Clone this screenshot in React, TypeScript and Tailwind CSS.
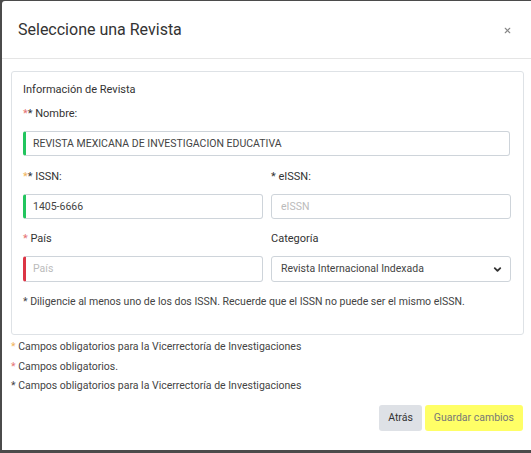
import { ChevronDown, X } from "lucide-react";

export default function App() {
  return (
    <div className="h-[453px] w-[531px] overflow-hidden bg-[#4b4b4b] pl-[2px] pt-[1px] font-[Roboto,sans-serif]">
      <div className="h-[449px] w-[540px] rounded-tl-[3px] bg-white text-[10.5px] text-[#333]">
        {/* Header */}
        <div className="flex h-[58px] items-center border-b border-[#e5e5e5] pl-[16px] pr-[24px]">
          <h2 className="flex-1 text-[16px] text-[#333]">Seleccione una Revista</h2>
          <button type="button" className="mr-[6px] mt-[2px] text-[#888]">
            <X className="size-[9px]" strokeWidth={3} />
          </button>
        </div>

        {/* Body */}
        <div className="w-[531px] px-[9px] pt-[12px]">
          <div className="rounded-[3px] border border-[#dee2e6] px-[11px] pb-[24px] pt-[10px]">
            <p className="mb-[8px] text-[11px] leading-[16px]">Información de Revista</p>
            <label className="block text-[11px] leading-[16px]">
              <span className="text-[#e57373]">*</span>
              <span>* Nombre:</span>
            </label>
            <div className="mt-[9px] flex h-[25px] w-[487px] items-center rounded-[3px] border border-l-[3px] border-[#ced4da] border-l-[#22c55e] pl-[7px] text-[#444]">
              REVISTA MEXICANA DE INVESTIGACION EDUCATIVA
            </div>

            <div className="mt-[13px] grid grid-cols-[240px_240px] gap-x-[8px]">
              <div>
                <label className="block text-[11px] leading-[16px]">
                  <span className="text-[#f0b35a]">*</span>* ISSN:
                </label>
                <div className="mt-[9px] flex h-[25px] items-center rounded-[3px] border border-l-[3px] border-[#ced4da] border-l-[#22c55e] pl-[7px] text-[#444]">
                  1405-6666
                </div>
              </div>
              <div>
                <label className="block text-[11px] leading-[16px]">* eISSN:</label>
                <div className="mt-[9px] flex h-[25px] items-center rounded-[3px] border border-[#ced4da] pl-[9px] text-[#bbb]">
                  eISSN
                </div>
              </div>

              <div className="mt-[12px]">
                <label className="block text-[11px] leading-[16px]">
                  <span className="text-[#e57373]">*</span> País
                </label>
                <div className="mt-[9px] flex h-[26px] items-center rounded-[3px] border border-l-[3px] border-[#ced4da] border-l-[#dc3545] pl-[7px] text-[#bbb]">
                  País
                </div>
              </div>
              <div className="mt-[12px]">
                <label className="block text-[11px] leading-[16px]">Categoría</label>
                <div className="mt-[9px] flex h-[26px] items-center justify-between rounded-[3px] border border-[#ced4da] pl-[9px] pr-[7px] text-[#444]">
                  Revista Internacional Indexada
                  <ChevronDown className="size-[11px] text-[#333]" strokeWidth={4} />
                </div>
              </div>
            </div>

            <p className="mt-[12px] leading-[16px] text-[#444]">
              * Diligencie al menos uno de los dos ISSN. Recuerde que el ISSN no puede ser el mismo eISSN.
            </p>
          </div>

          <div className="mt-[2px] flex flex-col leading-[19.5px] text-[#444]">
            <p>
              <span className="text-[#f0b35a]">*</span> Campos obligatorios para la Vicerrectoría de Investigaciones
            </p>
            <p>
              <span className="text-[#e57373]">*</span> Campos obligatorios.
            </p>
            <p>* Campos obligatorios para la Vicerrectoría de Investigaciones</p>
          </div>

          <div className="mt-[9px] flex justify-end gap-[3px] pr-[1px]">
            <button type="button" className="h-[26px] rounded-[3px] bg-[#dee1e6] px-[9px] text-[#333]">
              Atrás
            </button>
            <button type="button" className="h-[26px] rounded-[3px] bg-[#ffff66] px-[9px] text-[#777]">
              Guardar cambios
            </button>
          </div>
        </div>
      </div>
    </div>
  );
}
